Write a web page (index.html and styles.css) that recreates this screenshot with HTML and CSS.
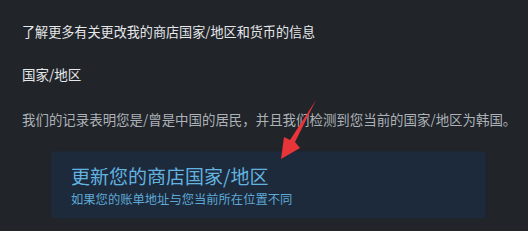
FILE: index.html
```html
<!DOCTYPE html>
<html lang="zh-CN">
<head>
    <meta charset="UTF-8">
    <title>商店国家/地区</title>
    <link rel="stylesheet" href="styles.css">
</head>
<body>
    <div class="page">
        <p class="link-line">了解更多有关更改我的商店国家/地区和货币的信息</p>

        <h2 class="section-title">国家/地区</h2>

        <p class="notice">我们的记录表明您是/曾是中国的居民，并且我们检测到您当前的国家/地区为韩国。</p>

        <!-- Update country button -->
        <div class="update-box">
            <div class="update-title">更新您的商店国家/地区</div>
            <div class="update-sub">如果您的账单地址与您当前所在位置不同</div>
        </div>
    </div>

    <!-- red annotation arrow -->
    <svg class="arrow" width="528" height="231" viewBox="0 0 528 231">
        <polygon points="316,100 295,142 300,148 281,159 284,137 290,140" fill="#e8353a"/>
    </svg>
</body>
</html>
```

FILE: styles.css
```css
body {
    margin: 0;
    background-color: #212429;
    font-family: "Noto Sans CJK SC", "Noto Sans", sans-serif;
}

.page {
    padding: 22px 0 0 22px;
}

.link-line {
    margin: 0;
    font-size: 13.1px;
    line-height: 20px;
    color: #e6e8ea;
}

.section-title {
    margin: 22px 0 0 0;
    font-size: 13.5px;
    font-weight: normal;
    line-height: 20px;
    color: #e6e8ea;
}

.notice {
    margin: 25px 0 0 0;
    font-size: 13.45px;
    line-height: 20px;
    color: #acb2b8;
    white-space: nowrap;
}

.update-box {
    margin: 23px 0 0 30px;
    width: 433px;
    height: 66px;
    box-sizing: border-box;
    padding: 10px 0 0 19px;
    background-color: #1c2a3b;
    box-shadow: 0 0 3px #1c2a3b;
}

.update-title {
    font-size: 19px;
    line-height: 28px;
    color: #63b3e0;
}

.update-sub {
    font-size: 12.3px;
    line-height: 18px;
    color: #5ea9d6;
}

.arrow {
    position: absolute;
    top: 0;
    left: 0;
    pointer-events: none;
}
```
